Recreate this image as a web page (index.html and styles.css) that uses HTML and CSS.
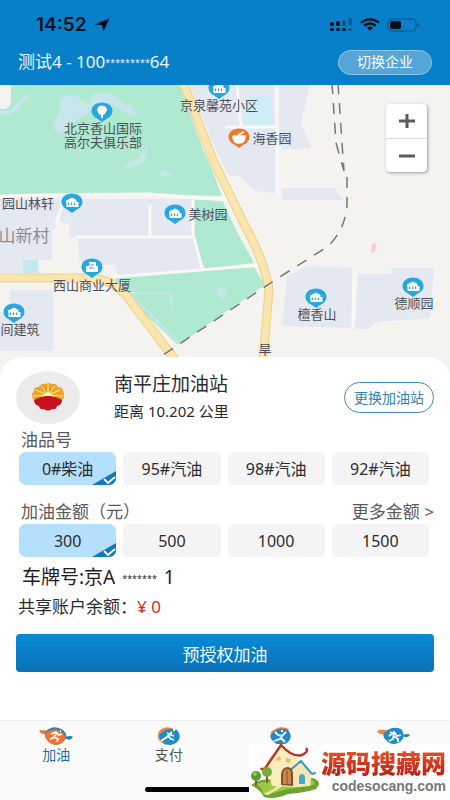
FILE: index.html
```html
<!DOCTYPE html>
<html lang="zh-CN">
<head>
<meta charset="utf-8">
<meta name="viewport" content="width=device-width, initial-scale=1">
<title>加油</title>
<link rel="stylesheet" href="styles.css">
</head>
<body>
<div class="app">
  <header class="header">
    <div class="status">
      <div class="status-side">
        <span class="clock">14:52</span>
        <svg width="16" height="14" viewBox="0 0 16 14"><path d="M.5 6.4 15.5.5 9.5 13.2 8 7.2z" fill="#06101c"/></svg>
      </div>
      <div class="status-side">
        <svg width="24" height="14" viewBox="0 0 24 14">
          <g fill="#06101c"><rect x="1" y="4" width="4" height="4" rx="1.5"/><rect x="7" y="3" width="4" height="5" rx="1.5"/><rect x="1" y="10" width="4" height="3" rx="1.5"/><rect x="7" y="10" width="4" height="3" rx="1.5"/><rect x="13" y="10" width="4" height="3" rx="1.5"/></g>
          <g fill="#0a5a98"><rect x="13" y="2" width="4" height="6" rx="1.5"/><rect x="19" y="0" width="4" height="8" rx="1.5"/><rect x="19" y="10" width="4" height="3" rx="1.5"/></g>
        </svg>
        <svg width="20" height="13" viewBox="0 0 20 13"><g fill="none" stroke="#06101c" stroke-width="2.4"><path d="M1 4.6Q10-2 19 4.6"/><path d="M4.2 7.7q5.8-4.4 11.6 0"/></g><path d="M6.8 9.6q3.2-2.2 6.4 0L10 12.8z" fill="#06101c"/></svg>
        <svg width="33" height="14" viewBox="0 0 33 14"><rect x="1" y="1" width="28" height="12" rx="3.5" fill="none" stroke="#0b4f86"/><rect x="3" y="3" width="11" height="8" rx="2" fill="#06101c"/><path d="M30.500 5v4q1.500-.6 1.500-2t-1.500-2" fill="#0b4f86"/></svg>
      </div>
    </div>
    <div class="company">
      <span class="company-name">测试4 - 100<span class="mask">*********</span>64</span>
      <button class="switch" type="button">切换企业</button>
    </div>
  </header>

  <section class="map" aria-label="地图">
    <svg class="map-art" viewBox="0 0 450 290" preserveAspectRatio="xMidYMin slice">
      <defs>
        <g id="pin"><path d="M0 10 5 6.500C9 4.500 10.500 1.800 10.500-1 10.500-6 6-9.500 0-9.500S-10.500-6-10.500-1C-10.500 1.800-9 4.500-5 6.500z"/></g>
        <g id="home"><use href="#pin" fill="#27a7df"/><path d="M-6-2.500 0-5.500 4.500-3v2h2v5h-12v-4.500h-.5z" fill="#fff"/><path d="M-3.500-.5v2.500M-.5-.5v2.500M2.500-.5v2.500" stroke="#27a7df" stroke-width="1.300"/></g>
      </defs>
      <rect width="450" height="290" fill="#f4f3f0"/>
      <g fill="#e4e8f0">
        <path d="M0 114h62l-6 27-4 5v29H39v13H0z"/>
        <path d="M64 114h129v36l10 35-85 5-3-10H97l-18-4v-20l-10-6v-11l-10-3z"/>
        <path d="M10 211v-6h43v61H0v-39h10z"/>
        <path d="M190 0h85v108l-20-2-16-15h-10l-14-28z"/>
        <path d="M278 0h32l-9 38 10 25-29 2-7-24zM282 103h52l10 12-62 0z"/>
        <path d="m287 191 20-10 47 2-2 60-70-2zM358 189h33l1-6h42l-4 50-23 2-26 1-6 2-7 6h-13z"/>
      </g>
      <path d="M246 11h25l2 30h-28z" fill="#cfeef5"/>
      <path d="M23 175h15v13H23z" fill="#c5e7ee"/>
      <g fill="#afead0">
        <path d="M11 0h170l13 35 14 38 14 38-72-2-80 1H0V24h5q6-2 6-9z"/>
        <path d="M193 115h29l14 30 18 33-50 6-9-30-2-7z"/>
        <path d="M114 192 254 182l11 18-87 60-50-47z"/>
      </g>
      <path d="M54 45c-2-13 8-14 6-22-5-8 9-16 16-13l12 10 6-12h17l10 9 10 4 7 11-10-3-19-11-18 7-19 14-11 11zM148 57l-8 15-15 7q-4 5 10 3 13-5 12-18zM158 89l6-4 8 5-5 2zM216 206l4-5 7 5-2 8-7-3z" fill="#c7e6ec"/>
      <path d="M0 28q15 0 20-10l9-8" fill="none" stroke="#c7e6ec" stroke-width="4"/>
      <path d="M128 208h43v15M129 208l50 50" fill="none" stroke="#c7e6ec" stroke-width="2"/>
      <g fill="none" stroke="#f9f8f5" stroke-width="3">
        <path d="M0 111q80-2 150-2l75 6M181 0l24 65 22 50M64 114l-8 25M150 120v31M75 152h118M193 115v34l10 37M237 0l4 42M225 42h50M277 0v110M354 183l-1 60M114 192l147-12"/>
      </g>
      <path d="M183-3 213 75l32 66q20 36 24 64l-6 72v15M0 193h87c25 0 37 13 47 28l46 60" fill="none" stroke="#edcf88" stroke-width="9"/>
      <path d="M183-3 213 75l32 66q20 36 24 64l-6 72v15M0 193h87c25 0 37 13 47 28l46 60" fill="none" stroke="#fbe5ae" stroke-width="7"/>
      <g fill="none" stroke="#77777a" stroke-width="1.500" stroke-dasharray="11 9"><path d="M332-2l4 60 8 28M338-2l4 60 2 28M347 92v28q-2 26-20 42l-52 33L160 272"/></g>
      <path d="m372 159 4-1-1 9-4 1z" fill="#f6cbd0"/>
      <g class="place">
        <use href="#pin" fill="#27a7df" x="102" y="27"/><path d="M98 22q4-3 8 0l1 3-2 4-2 1v3h-2v-3l-2-1-2-4z" fill="#fff"/>
        <text x="103" y="48">北京香山国际</text><text x="103" y="62">高尔夫俱乐部</text>
        <use href="#home" x="219" y="4"/><text x="219" y="25">京泉馨苑小区</text>
        <use href="#pin" fill="#ee7a32" x="239" y="53"/><path d="M233 51h12q0 7-6 7t-6-7m5-1 6-3" fill="#fff" stroke="#fff" stroke-width="1.500"/>
        <text x="272" y="58">海香园</text>
        <use href="#home" x="72" y="118"/><text x="28" y="123">园山林轩</text>
        <use href="#home" x="175" y="129"/><text x="208" y="134">美树园</text>
        <use href="#pin" fill="#27a7df" x="92" y="183"/><path d="M86 187v-6h3v-4h7v4h2v6z" fill="#fff"/><path d="M90 180h4M89 183h5" stroke="#27a7df"/>
        <text x="92" y="205">西山商业大厦</text>
        <use href="#home" x="14" y="228"/><text x="20" y="249">间建筑</text>
        <use href="#home" x="316" y="213"/><text x="317" y="234">檀香山</text>
        <use href="#home" x="413" y="202"/><text x="414" y="223">德顺园</text>
        <text x="265" y="269">旱</text>
      </g>
      <text class="village" x="24" y="157">山新村</text>
    </svg>
    <div class="zoom">
      <button type="button" aria-label="放大"><svg width="16" height="14" viewBox="0 0 16 14"><path d="M0 7h16M8 0v14" stroke="#5c5c60" stroke-width="3"/></svg></button>
      <button type="button" aria-label="缩小"><svg width="16" height="14" viewBox="0 0 16 14"><path d="M0 7h16" stroke="#5c5c60" stroke-width="3"/></svg></button>
    </div>
  </section>

  <main class="sheet">
    <div class="station">
      <div class="brand">
        <svg width="32" height="28" viewBox="0 0 32 28">
          <path d="M2 17Q-2 12 2 8 2 4 7 4 9 0 14 1q2-2 5 0 5-1 7 3 5 0 5 4 3 5-1 9z" fill="#f0a21d"/>
          <path d="M2 17Q16 9 30 17q0 5-5 6-1 4-5 3-4 3-8 0-4 1-5-3-5-1-5-6" fill="#c9101f"/>
          <path d="M16 12 1 13M16 12 4 7M16 12 9 3M16 12V1M16 12l7-9M16 12l12-5M16 12l15 1" stroke="#fff1b8"/>
          <path d="m9 14 7-5 7 5q-7-3-14 0" fill="#fff8dc"/>
        </svg>
      </div>
      <div class="station-info">
        <h1>南平庄加油站</h1>
        <p>距离 10.202 公里</p>
      </div>
      <button class="change" type="button">更换加油站</button>
    </div>

    <fieldset class="group">
      <legend class="group-title">油品号</legend>
      <div class="options">
        <label class="option"><input type="radio" name="oil" checked><span>0#柴油</span><svg class="tick" viewBox="0 0 24 14"><path d="M0 14 24 0v14z" fill="#1478ba"/><path d="m12 8 4 4 7-6" fill="none" stroke="#fff" stroke-width="1.800"/></svg></label>
        <label class="option"><input type="radio" name="oil"><span>95#汽油</span></label>
        <label class="option"><input type="radio" name="oil"><span>98#汽油</span></label>
        <label class="option"><input type="radio" name="oil"><span>92#汽油</span></label>
      </div>
    </fieldset>

    <section class="group">
      <div class="group-head"><h2 class="group-title" id="amount">加油金额（元）</h2><a class="more" href="#amount">更多金额 &gt;</a></div>
      <div class="options" role="radiogroup" aria-labelledby="amount">
        <label class="option"><input type="radio" name="amount" checked><span>300</span><svg class="tick" viewBox="0 0 24 14"><path d="M0 14 24 0v14z" fill="#1478ba"/><path d="m12 8 4 4 7-6" fill="none" stroke="#fff" stroke-width="1.800"/></svg></label>
        <label class="option"><input type="radio" name="amount"><span>500</span></label>
        <label class="option"><input type="radio" name="amount"><span>1000</span></label>
        <label class="option"><input type="radio" name="amount"><span>1500</span></label>
      </div>
    </section>

    <p class="plate">车牌号:京A <span class="mask">*******</span> 1</p>
    <p class="balance">共享账户余额：<span class="money">¥ 0</span></p>
    <button class="submit" type="button">预授权加油</button>
  </main>

  <footer class="footer">
    <nav class="tabs">
      <a class="tab active" href="#fuel">
        <svg width="34" height="19" viewBox="0 0 34 19"><path d="M0 4q3-2 8 0v3Q3 8 0 4" fill="#e77a36"/><path d="M26 10q6-2 8 0-3 5-8 1" fill="#2784b5"/><path d="M7 4Q15-3 24 3q7 6 0 12-8 6-15-1-5-4-2-10" fill="#3288b5"/><path d="M7 6q9-7 18 1 3 5-2 9-7 5-14-2Q5 10 7 6" fill="#f27432"/><path d="m12 7 5-2 3 3 3-1M18 6l-4 5-3 1M15 10l4 2-1 3M21 4h1" fill="none" stroke="#fff" stroke-width="1.800"/></svg>
        <span>加油</span>
      </a>
      <a class="tab" href="#pay">
        <svg width="34" height="19" viewBox="0 0 34 19"><path d="M7 4Q15-3 23 3l-9 15Q3 14 7 4" fill="#ef854c"/><path d="M8 7q8-8 17-4 6 7-1 13-8 5-14-2-4-3-2-7" fill="#218bc7"/><path d="M21 3h2M20 5l-5 5-6 4M15 6l4 2 3 1M16 9l3 3 3 1" fill="none" stroke="#fff" stroke-width="1.800"/></svg>
        <span>支付</span>
      </a>
      <a class="tab" href="#orders" aria-label="订单">
        <svg width="34" height="19" viewBox="0 0 34 19"><path d="M6 6Q15-3 25 2l-5 7z" fill="#ef854c"/><path d="M7 7q8-8 17-4 6 7-1 13-8 5-14-2-4-3-2-7" fill="#218bc7"/><path d="m11 5 3 3 4 1 4-4M18 8l-2 4-6 2M17 11l4 4M17 4h2" fill="none" stroke="#fff" stroke-width="1.800"/></svg>
      </a>
      <a class="tab" href="#mine" aria-label="我的">
        <svg width="34" height="19" viewBox="0 0 34 19"><path d="M0 4q3-2 10-1l-2 4Q2 8 0 4" fill="#ef854c"/><path d="M26 8q5-2 7 0-3 4-7 1" fill="#2784b5"/><path d="M7 6q8-8 17-4 6 7-1 13-8 5-14-2-4-3-2-7" fill="#218bc7"/><path d="m12 9 5-4 3 4 4-1M17 6l-1 6-4 2M16 9l5 3v3M13 5l2 1" fill="none" stroke="#fff" stroke-width="1.800"/></svg>
      </a>
    </nav>
    <div class="home-bar"></div>
    <div class="site">
      <svg class="house" width="72" height="56" viewBox="0 0 72 56">
        <path d="M2 43q10-8 27-5l35-2q10 4 3 11-12 4-28 5-13 6-24 3-3-7-13-12" fill="#6ba431"/>
        <path d="M6 42q20-5 57-4 6 4-2 6-20 2-30 5-9 4-17 2-1-6-8-9" fill="#9bcb46"/>
        <path d="M35 43q-7 5-16 10l-5-1q13-5 14-9z" fill="#f2e8aa"/>
        <path d="M17 19 33 4l21 18-1 23-30-1z" fill="#f8edbb"/>
        <path d="M42 28 52 20l11 10-2 14-19 1z" fill="#f5e6b5"/>
        <path d="M12 26q2 3 5-1L32 3q12 13 21 10 7-3 4-7" fill="none" stroke="#bd342b" stroke-width="2.500"/>
        <path d="M39 30 52 19l10 12q4 2 4-1" fill="none" stroke="#3899b6" stroke-width="2"/>
        <path d="M32 43V32q1-7 7-7 5 1 5 7v12z" fill="#8b4d22"/><path d="M34 42V32q1-5 4-5 4 0 4 5v10" fill="#c7894d"/><path d="M38 28v14" stroke="#8b4d22"/>
        <path d="M50 34q3-4 6 0v8h-6z" fill="#45a8c5"/>
        <path d="m27 16 4-2 1 4-4 1zm10 0 5 1-1 4-4-1z" fill="#ecb770"/>
        <path d="M7 36v7M18 33v8" stroke="#8b542c" stroke-width="2"/><circle cx="7" cy="34" r="5" fill="#5d9b30"/><circle cx="18" cy="30" r="5" fill="#76ad36"/><circle cx="6" cy="32" r="2" fill="#9bcb46"/>
      </svg>
      <div class="site-text"><strong>源码搜藏网</strong><span>codesocang.com</span></div>
    </div>
  </footer>
</div>
</body>
</html>
```
FILE: styles.css
```css
* { box-sizing: border-box; }

body {
  margin: 0;
  background: #fff;
  color: #2c2c2e;
  font-family: "Noto Sans", "Noto Sans CJK SC", sans-serif;
}

h1, h2, p { margin: 0; font-weight: 400; }
button { border: 0; padding: 0; font-family: inherit; }
a { color: inherit; text-decoration: none; }
svg { display: block; flex: none; }

.app {
  min-height: 100vh;
  display: flex;
  flex-direction: column;
}

.header {
  padding: 12px 18px 0;
  background: #087fc9;
  color: #eaf6ff;
}

.status {
  display: flex;
  justify-content: space-between;
  align-items: center;
  height: 25px;
  padding: 0 12px 0 18px;
}

.status-side { display: flex; align-items: center; gap: 7px; }
.clock { color: #06101c; font: 600 19px/24px Inter, sans-serif; }

.company {
  display: flex;
  justify-content: space-between;
  align-items: center;
  height: 48px;
  padding-top: 2px;
}

.company-name { font-size: 17px; line-height: 24px; }
.mask { font-size: 9px; vertical-align: 2px; }

.switch {
  width: 94px;
  height: 25px;
  border: 1px solid #8fc6e8;
  border-radius: 13px;
  background: #55a5d7;
  color: #fff;
  font-size: 14px;
  line-height: 20px;
}

.map { position: relative; height: 290px; }
.map-art { width: 100%; height: 100%; }

.place {
  fill: #4b4f5c;
  font-size: 13px;
  text-anchor: middle;
}

.village { fill: #8b8d93; font-size: 17px; text-anchor: middle; }

.zoom {
  position: absolute;
  top: 19px;
  right: 23px;
  width: 41px;
  border-radius: 4px;
  background: #fff;
  box-shadow: 1px 1px 3px #999;
}

.zoom button {
  display: grid;
  place-items: center;
  width: 100%;
  height: 34px;
  background: none;
}

.zoom button + button { border-top: 1px solid #ddd; }

.sheet {
  position: relative;
  flex: 1;
  margin-top: -18px;
  padding: 13px 16px 16px;
  border-radius: 22px 22px 0 0;
  background: #fff;
}

.station { display: flex; align-items: center; height: 54px; }

.brand {
  display: grid;
  place-items: center;
  width: 64px;
  height: 53px;
  border-radius: 50%;
  background: #ebebec;
}

.station-info { flex: 1; margin-left: 34px; }
.station-info h1 { font-size: 19px; line-height: 28px; }
.station-info p { font-size: 15px; line-height: 26px; }

.change {
  width: 90px;
  height: 31px;
  border: 1px solid #3f8dbd;
  border-radius: 16px;
  background: #fff;
  color: #2f82b5;
  font-size: 14px;
}

.group { margin: 4px 0 0; padding: 0 5px 0 3px; border: 0; min-width: 0; }
.group-head { display: flex; justify-content: space-between; margin-right: -5px; }
.group-title { padding: 0 0 0 2px; color: #5a5a5c; font-size: 17px; line-height: 24px; }
.more { color: #5a5a5c; font-size: 17px; line-height: 24px; }

.group + .group { margin-top: 15px; }

.options {
  display: grid;
  grid-template-columns: repeat(4, 1fr);
  gap: 7px;
}

.option {
  position: relative;
  display: grid;
  place-items: center;
  height: 33px;
  border-radius: 5px;
  overflow: hidden;
  background: #f4f4f5;
  font-size: 16px;
  line-height: 24px;
}

.option input { position: absolute; opacity: 0; margin: 0; }
.option:has(:checked) { background: #b4dffd; border-radius: 7px; }
.tick { position: absolute; right: 0; bottom: 0; width: 24px; height: 14px; }

.plate { margin: 6px 0 0 6px; color: #1c1c1e; font-size: 19px; line-height: 28px; }
.plate .mask { margin: 0 2px; }
.balance { margin-left: 2px; font-size: 17px; line-height: 28px; }
.money { color: #dd2822; }

.submit {
  display: block;
  width: 100%;
  height: 38px;
  margin-top: 13px;
  border-radius: 4px;
  background: linear-gradient(#078bd7, #0b70b6);
  color: #f2faff;
  font-size: 17px;
}

.footer {
  position: relative;
  height: 80px;
  border-top: 1px solid #eee;
  background: #fafafa;
}

.tabs { display: grid; grid-template-columns: repeat(4, 1fr); }

.tab {
  display: flex;
  flex-direction: column;
  align-items: center;
  padding-top: 6px;
  color: #555;
  font-size: 14px;
  line-height: 18px;
}

.tab.active { color: #236fa5; }

.home-bar {
  position: absolute;
  left: 50%;
  bottom: 8px;
  width: 160px;
  height: 5px;
  margin-left: -80px;
  border-radius: 3px;
  background: #000;
}

.site {
  position: absolute;
  right: 0;
  bottom: 0;
  display: flex;
  align-items: center;
  width: 201px;
  height: 56px;
  padding-bottom: 4px;
  background: #fff;
}

.site-text { display: flex; flex-direction: column; align-items: flex-end; }

.site-text strong {
  background: linear-gradient(#ef5a26, #b91d19);
  background-clip: text;
  color: transparent;
  font: 900 25px/32px "Noto Sans CJK SC", sans-serif;
}

.site-text span { color: #777; font: bold 14px/16px "Liberation Sans", sans-serif; }
```
